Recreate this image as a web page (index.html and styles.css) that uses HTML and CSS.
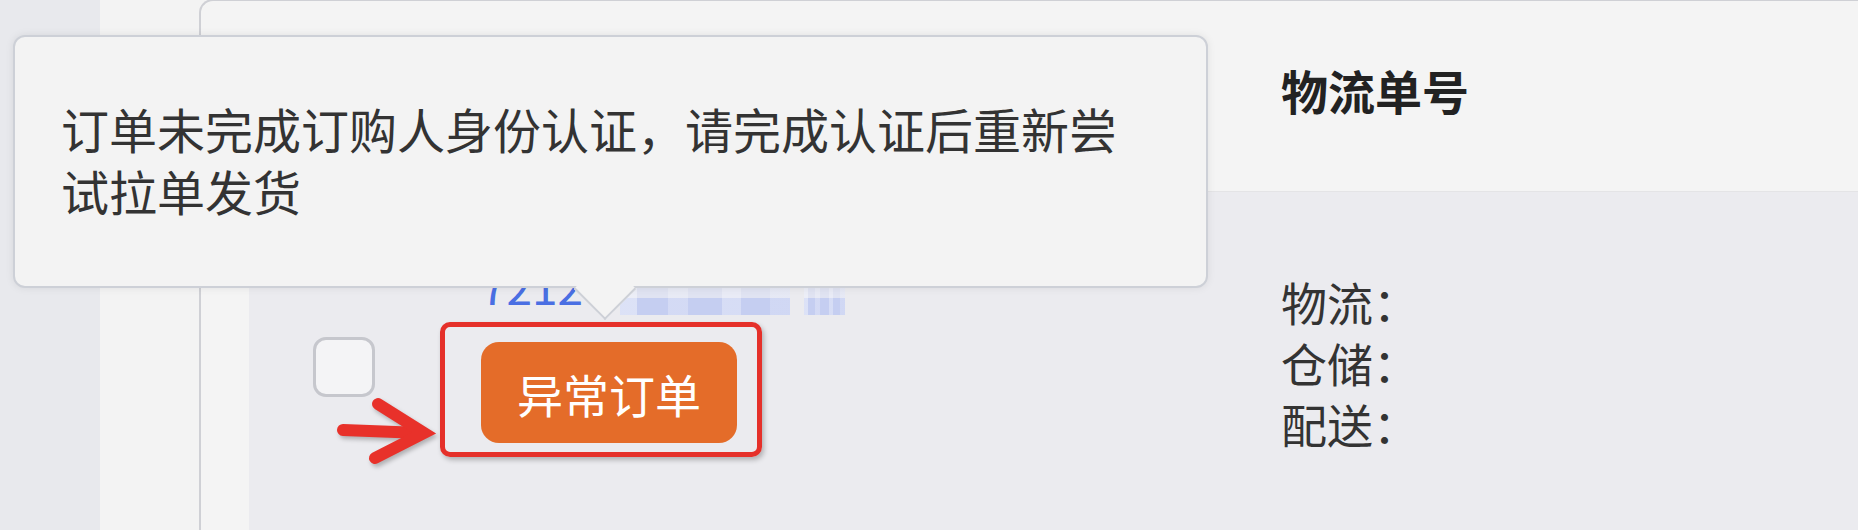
FILE: index.html
```html
<!DOCTYPE html>
<html lang="zh-CN">
<head>
    <meta charset="UTF-8">
    <meta name="viewport" content="width=device-width, initial-scale=1.0">
    <title>订单列表</title>
    <link rel="stylesheet" href="styles.css">
</head>
<body>
    <div class="sidebar"></div>
    <div class="gutter"></div>

    <div class="order-table">
        <!-- Header row -->
        <div class="table-row table-head">
            <div class="cell"></div>
            <div class="cell"></div>
            <div class="cell">物流单号</div>
        </div>

        <!-- Order row -->
        <div class="table-row table-body">
            <div class="cell cell-check">
                <span class="checkbox"></span>
            </div>
            <div class="cell cell-order">
                <div class="order-no">7212<span class="masked"></span><span class="masked short"></span></div>
                <div class="status-wrap">
                    <button class="status-btn">异常订单</button>
                    <!-- red annotation box + arrow -->
                    <span class="mark-box"></span>
                    <svg class="mark-arrow" viewBox="0 0 110 75">
                        <g fill="none" stroke="#e8312a" stroke-width="12" stroke-linecap="round">
                            <line x1="13" y1="35" x2="92" y2="38"/>
                            <polyline points="48,9 94,38 45,63" stroke-linejoin="miter"/>
                        </g>
                    </svg>
                </div>
            </div>
            <div class="cell cell-logistics">
                物流：<br>
                仓储：<br>
                配送：
            </div>
        </div>
    </div>

    <!-- Tooltip for the status button -->
    <div class="tooltip">订单未完成订购人身份认证，请完成认证后重新尝试拉单发货</div>
</body>
</html>
```

FILE: styles.css
```css
body {
    margin: 0;
    height: 530px;
    display: flex;
    position: relative;
    overflow: hidden;
    background-color: #f3f3f3;
    color: #333;
    font-family: "Noto Sans CJK SC", sans-serif;
}
.sidebar {
    width: 100px;
    flex-shrink: 0;
    background-color: #e8e9ed;
}
.gutter {
    width: 99px;
    flex-shrink: 0;
}
.order-table {
    flex: 1;
    display: flex;
    flex-direction: column;
    margin-top: -1px;
    border-left: 2px solid #cfd0d5;
    border-top: 2px solid #cfd0d5;
    border-top-left-radius: 14px;
    background-color: #f4f4f4;
}
.table-row {
    display: grid;
    grid-template-columns: 232px 800px 1fr;
}
.table-head {
    height: 190px;
    padding-left: 48px;
    border-bottom: 1px solid #e4e4e6;
    font-size: 47px;
    font-weight: bold;
    line-height: 60px;
    color: #222;
}
.table-head .cell {
    padding-top: 59px;
}
.table-body {
    flex: 1;
    margin-left: 48px;
    background-color: #ebebef;
}
.cell-check {
    padding: 145px 0 0 64px;
}
.checkbox {
    display: block;
    width: 56px;
    height: 54px;
    border: 3px solid #c6c7cd;
    border-radius: 13px;
    background-color: #f4f4f6;
}
.cell-order {
    padding-top: 65px;
}
.order-no {
    height: 56px;
    font-size: 46px;
    line-height: 56px;
    color: #4a6fe3;
    white-space: nowrap;
}
.masked {
    display: inline-block;
    width: 170px;
    height: 33px;
    margin-left: 37px;
    vertical-align: -10px;
    background:
        linear-gradient(90deg, rgba(255,255,255,.4) 0 10%, transparent 10% 28%, rgba(255,255,255,.25) 28% 40%, transparent 40% 60%, rgba(255,255,255,.3) 60% 71%, transparent 71% 88%, rgba(255,255,255,.2) 88%),
        linear-gradient(#e0e3f2 0 48%, #c5cef1 48%);
}
.masked.short {
    width: 41px;
    margin-left: 14px;
}
.status-wrap {
    position: relative;
    width: 256px;
    margin-top: 29px;
}
.status-btn {
    display: block;
    width: 256px;
    height: 101px;
    padding: 0;
    border: none;
    border-radius: 18px;
    background-color: #e46c29;
    color: #fff;
    font-family: "Noto Sans CJK SC", sans-serif;
    font-size: 46px;
}
.mark-box {
    position: absolute;
    top: -20px;
    right: -25px;
    bottom: -14px;
    left: -41px;
    border: 5px solid #e5302a;
    border-radius: 10px;
    box-shadow: 2px 3px 5px rgba(0, 0, 0, .25);
}
.mark-arrow {
    position: absolute;
    left: -151px;
    top: 53px;
    width: 110px;
    height: 75px;
    overflow: visible;
    filter: drop-shadow(2px 3px 2px rgba(0, 0, 0, .25));
}
.cell-logistics {
    padding-top: 79px;
    font-size: 46px;
    line-height: 61px;
    color: #333;
}
.tooltip {
    position: absolute;
    left: 13px;
    top: 35px;
    z-index: 2;
    box-sizing: border-box;
    width: 1195px;
    height: 253px;
    padding: 60px 46px 0;
    border: 2px solid #cdd0d7;
    border-radius: 12px;
    background-color: #f3f3f3;
    box-shadow: 0 0 8px rgba(0, 0, 0, .08);
    font-size: 48px;
    line-height: 62px;
    color: #333;
}
.tooltip::after {
    content: "";
    position: absolute;
    left: 568px;
    top: 230px;
    box-sizing: border-box;
    width: 44px;
    height: 44px;
    border-right: 2px solid #cdd0d7;
    border-bottom: 2px solid #cdd0d7;
    background-color: #f3f3f3;
    transform: rotate(45deg);
}
```
